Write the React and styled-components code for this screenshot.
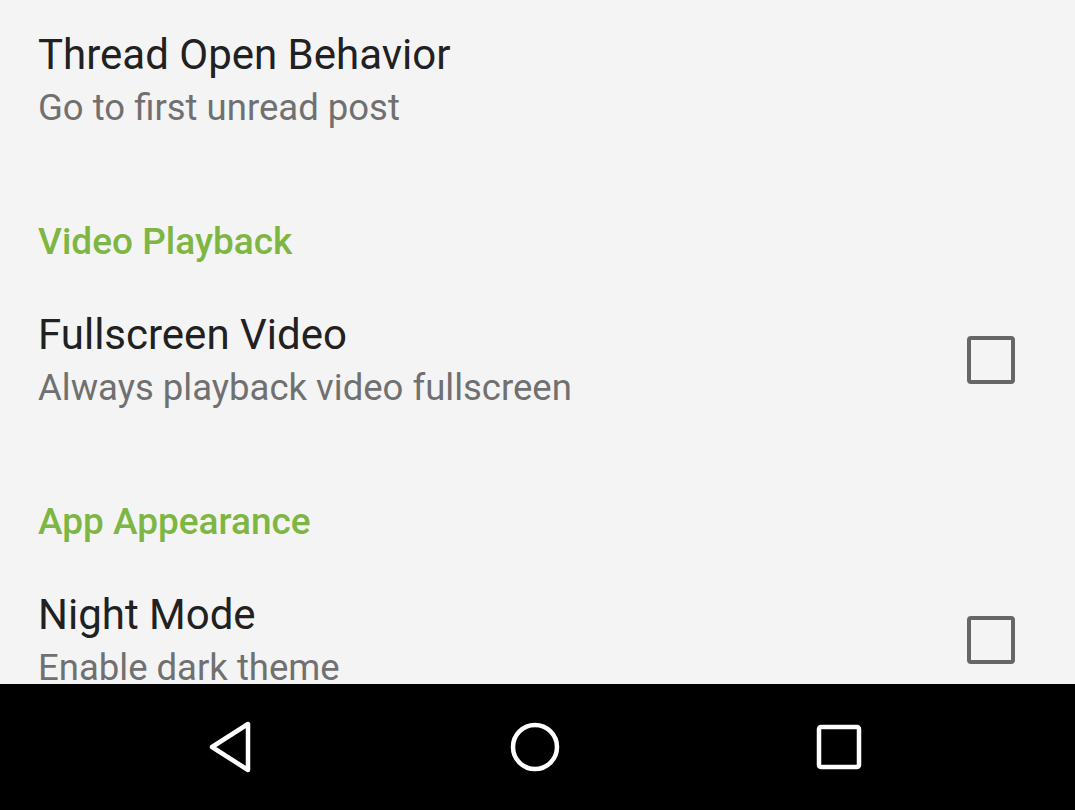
import React from "react";
import styled, { createGlobalStyle } from "styled-components";

const GlobalStyle = createGlobalStyle`
  html, body {
    margin: 0;
    padding: 0;
    background: #f4f4f4;
  }
  body {
    font-family: Roboto, "Noto Sans", "Liberation Sans", sans-serif;
    -webkit-font-smoothing: antialiased;
  }
`;

const Screen = styled.div`
  width: 1075px;
  height: 810px;
  display: flex;
  flex-direction: column;
  overflow: hidden;
  background: #f4f4f4;
`;

const Settings = styled.div`
  flex: 1;
  overflow: hidden;
  padding-top: 30px;
`;

const Item = styled.div`
  display: flex;
  align-items: center;
  justify-content: space-between;
  padding: 0 60px 0 38px;
  margin-bottom: ${({ $gap }) => $gap}px;
`;

const Texts = styled.div`
  display: flex;
  flex-direction: column;
`;

const Title = styled.div`
  font-size: 42px;
  line-height: 50px;
  color: #212121;
`;

const Summary = styled.div`
  font-size: 36.5px;
  line-height: 44px;
  margin-top: 6px;
  color: #707070;
`;

const Category = styled.div`
  padding-left: 38px;
  font-size: 37px;
  line-height: 44px;
  font-weight: 500;
  color: #7db643;
  margin-bottom: 46px;
`;

const Checkbox = styled.div`
  width: 48px;
  height: 48px;
  box-sizing: border-box;
  border: 4.5px solid #666666;
  border-radius: 4px;
`;

const NavBar = styled.nav`
  height: 126px;
  flex-shrink: 0;
  background: #000000;
  display: grid;
  grid-template-columns: repeat(3, 1fr);
  align-items: center;
  justify-items: center;
  padding: 0 84px 0 79px;
`;

const NavButton = styled.button`
  background: none;
  border: none;
  padding: 0;
  width: 56px;
  height: 56px;
  display: flex;
  align-items: center;
  justify-content: center;
`;

const BackIcon = () => (
  <svg width="48" height="52" viewBox="0 0 48 52" fill="none">
    <path
      d="M41 3 L41 49 L5 26 Z"
      stroke="#fff"
      strokeWidth="4.5"
      strokeLinejoin="round"
    />
  </svg>
);

const HomeIcon = () => (
  <svg width="52" height="52" viewBox="0 0 52 52" fill="none">
    <circle cx="26" cy="26" r="22" stroke="#fff" strokeWidth="4.5" />
  </svg>
);

const RecentsIcon = () => (
  <svg width="48" height="48" viewBox="0 0 48 48" fill="none">
    <rect
      x="4"
      y="4"
      width="40"
      height="40"
      rx="2"
      stroke="#fff"
      strokeWidth="4.5"
    />
  </svg>
);

export default function App() {
  return (
    <>
      <GlobalStyle />
      <Screen>
        <Settings>
          <Item $gap={90}>
            <Texts>
              <Title>Thread Open Behavior</Title>
              <Summary>Go to first unread post</Summary>
            </Texts>
          </Item>

          <Category>Video Playback</Category>
          <Item $gap={90}>
            <Texts>
              <Title>Fullscreen Video</Title>
              <Summary>Always playback video fullscreen</Summary>
            </Texts>
            <Checkbox />
          </Item>

          <Category>App Appearance</Category>
          <Item $gap={0}>
            <Texts>
              <Title>Night Mode</Title>
              <Summary>Enable dark theme</Summary>
            </Texts>
            <Checkbox />
          </Item>
        </Settings>

        <NavBar>
          <NavButton aria-label="Back">
            <BackIcon />
          </NavButton>
          <NavButton aria-label="Home">
            <HomeIcon />
          </NavButton>
          <NavButton aria-label="Recents">
            <RecentsIcon />
          </NavButton>
        </NavBar>
      </Screen>
    </>
  );
}
